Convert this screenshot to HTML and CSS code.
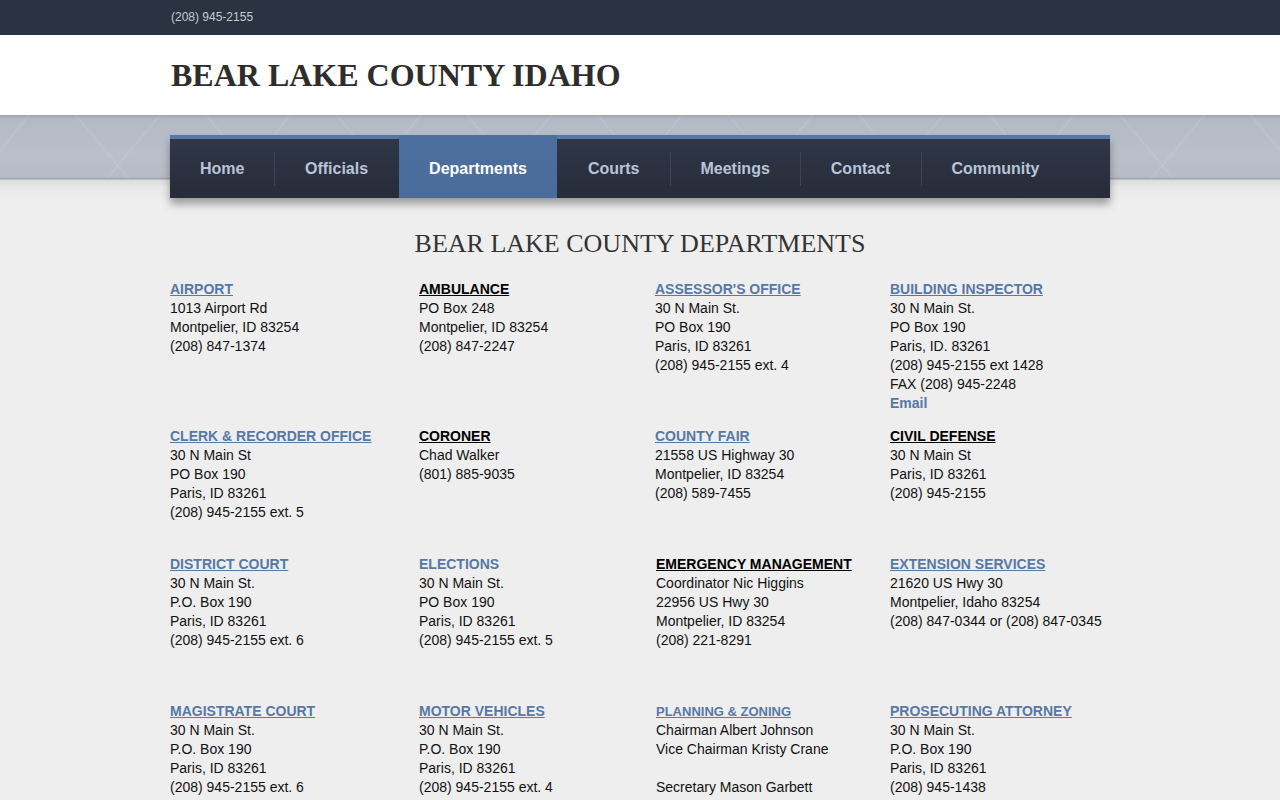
FILE: index.html
```html
<!DOCTYPE html>
<html>
<head>
<meta charset="utf-8">
<title>Bear Lake County Idaho - Departments</title>
<link rel="stylesheet" href="styles.css">
</head>
<body>
<div class="topbar"><div class="wrap"><span class="phone">(208) 945-2155</span></div></div>
<div class="header"><div class="wrap"><h1 class="site-title">BEAR LAKE COUNTY IDAHO</h1></div></div>
<div class="band">
  <nav class="nav wrap">
    <a class="nav-item first" href="#">Home</a>
    <a class="nav-item sep" href="#">Officials</a>
    <a class="nav-item active" href="#">Departments</a>
    <a class="nav-item" href="#">Courts</a>
    <a class="nav-item sep" href="#">Meetings</a>
    <a class="nav-item sep" href="#">Contact</a>
    <a class="nav-item sep" href="#">Community</a>
  </nav>
</div>
<main class="wrap">
  <h2 class="page-title">BEAR LAKE COUNTY DEPARTMENTS</h2>
  <div class="depts">
    <div class="dept"><a class="dh link" href="#">AIRPORT</a><br>1013 Airport Rd<br>Montpelier, ID 83254<br>(208) 847-1374</div>
    <div class="dept"><span class="dh plain">AMBULANCE</span><br>PO Box 248<br>Montpelier, ID 83254<br>(208) 847-2247</div>
    <div class="dept"><a class="dh link" href="#">ASSESSOR'S OFFICE</a><br>30 N Main St.<br>PO Box 190<br>Paris, ID 83261<br>(208) 945-2155 ext. 4</div>
    <div class="dept"><a class="dh link" href="#">BUILDING INSPECTOR</a><br>30 N Main St.<br>PO Box 190<br>Paris, ID. 83261<br>(208) 945-2155 ext 1428<br>FAX (208) 945-2248<br><a class="email" href="#">Email</a></div>

    <div class="dept"><a class="dh link" href="#">CLERK &amp; RECORDER OFFICE</a><br>30 N Main St<br>PO Box 190<br>Paris, ID 83261<br>(208) 945-2155 ext. 5</div>
    <div class="dept"><span class="dh plain">CORONER</span><br>Chad Walker<br>(801) 885-9035</div>
    <div class="dept"><a class="dh link" href="#">COUNTY FAIR</a><br>21558 US Highway 30<br>Montpelier, ID 83254<br>(208) 589-7455</div>
    <div class="dept"><span class="dh plain">CIVIL DEFENSE</span><br>30 N Main St<br>Paris, ID 83261<br>(208) 945-2155</div>

    <div class="dept"><a class="dh link" href="#">DISTRICT COURT</a><br>30 N Main St.<br>P.O. Box 190<br>Paris, ID 83261<br>(208) 945-2155 ext. 6</div>
    <div class="dept"><a class="dh link nou" href="#">ELECTIONS</a><br>30 N Main St.<br>PO Box 190<br>Paris, ID 83261<br>(208) 945-2155 ext. 5</div>
    <div class="dept indent"><span class="dh plain">EMERGENCY MANAGEMENT</span><br>Coordinator Nic Higgins<br>22956 US Hwy 30<br>Montpelier, ID 83254<br>(208) 221-8291</div>
    <div class="dept"><a class="dh link" href="#">EXTENSION SERVICES</a><br>21620 US Hwy 30<br>Montpelier, Idaho 83254<br>(208) 847-0344 or (208) 847-0345</div>

    <div class="dept"><a class="dh link" href="#">MAGISTRATE COURT</a><br>30 N Main St.<br>P.O. Box 190<br>Paris, ID 83261<br>(208) 945-2155 ext. 6</div>
    <div class="dept"><a class="dh link" href="#">MOTOR VEHICLES</a><br>30 N Main St.<br>P.O. Box 190<br>Paris, ID 83261<br>(208) 945-2155 ext. 4</div>
    <div class="dept indent"><a class="dh link small" href="#">PLANNING &amp; ZONING</a><br>Chairman Albert Johnson<br>Vice Chairman Kristy Crane<br><br>Secretary Mason Garbett</div>
    <div class="dept"><a class="dh link" href="#">PROSECUTING ATTORNEY</a><br>30 N Main St.<br>P.O. Box 190<br>Paris, ID 83261<br>(208) 945-1438</div>
  </div>
</main>
</body>
</html>
```

FILE: styles.css
```css
html, body {
  margin: 0;
  padding: 0;
}
body {
  background: #eeeeee;
  font-family: "Liberation Sans", Arial, sans-serif;
  color: #111;
  overflow: hidden;
}
.wrap {
  width: 940px;
  margin: 0 auto;
}
.topbar {
  height: 35px;
  background: #2b3241;
}
.phone {
  display: block;
  padding-left: 1px;
  line-height: 35px;
  font-size: 12px;
  color: #c6cad1;
}
.header {
  height: 80px;
  background: #ffffff;
}
.site-title {
  margin: 0;
  padding-left: 1px;
  line-height: 80px;
  font-family: "Liberation Serif", "Times New Roman", serif;
  font-weight: bold;
  font-size: 32px;
  color: #2f2d2b;
}
.band {
  padding-top: 20px;
  background:
    repeating-linear-gradient(50deg, rgba(255,255,255,0) 0, rgba(255,255,255,0) 98px, rgba(255,255,255,0.07) 98px, rgba(255,255,255,0.07) 100px),
    repeating-linear-gradient(-50deg, rgba(255,255,255,0) 0, rgba(255,255,255,0) 98px, rgba(255,255,255,0.07) 98px, rgba(255,255,255,0.07) 100px);
  background-size: 100% 64px, 100% 64px;
  background-repeat: no-repeat;
  position: relative;
}
.band::before {
  content: "";
  position: absolute;
  left: 0;
  right: 0;
  top: 0;
  height: 85px;
  z-index: -1;
  background: linear-gradient(to bottom, #9ea5b0 0, #b3bac5 4px, #b9c0cb 40px, #b6bdc8 62px, #9aa0aa 64px, #dcdcdc 65px, #e8e8e8 72px, #eeeeee 85px);
}
.nav {
  display: flex;
  height: 59px;
  border-top: 4px solid #5678a5;
  background: linear-gradient(to bottom, #2f3646 0, #262c39 100%);
  box-shadow: 0 6px 8px rgba(0,0,0,0.35);
}
.nav-item {
  position: relative;
  padding: 0 30.5px;
  line-height: 59px;
  font-size: 16px;
  font-weight: bold;
  color: #b8c4d8;
  text-decoration: none;
}
.nav-item.first {
  padding: 0 30px;
}
.nav-item.sep::before {
  content: "";
  position: absolute;
  left: 0;
  top: 13px;
  height: 34px;
  width: 1px;
  background: #3d4555;
}
.nav-item.active {
  background: linear-gradient(to bottom, #4c6f9f 0, #4a6c9a 100%);
  margin-top: -4px;
  padding-top: 4px;
  height: 59px;
  color: #ffffff;
}
.page-title {
  margin: 30px 0 0;
  text-align: center;
  font-family: "Liberation Serif", "Times New Roman", serif;
  font-weight: normal;
  font-size: 26px;
  line-height: 32px;
  color: #333333;
}
.depts {
  display: grid;
  grid-template-columns: 249px 236px 235px 220px;
  grid-template-rows: 147px 128px 147px auto;
  margin-top: 20px;
  font-size: 14px;
  line-height: 19px;
}
.dept {
  white-space: nowrap;
}
.dept.indent {
  padding-left: 1px;
}
.dh {
  font-weight: bold;
  text-decoration: underline;
}
.dh.link {
  color: #5678a5;
}
.dh.plain {
  color: #000;
}
.dh.nou {
  text-decoration: none;
}
.dh.small {
  font-size: 13px;
}
.email {
  color: #5678a5;
  font-weight: bold;
  text-decoration: none;
}
```
